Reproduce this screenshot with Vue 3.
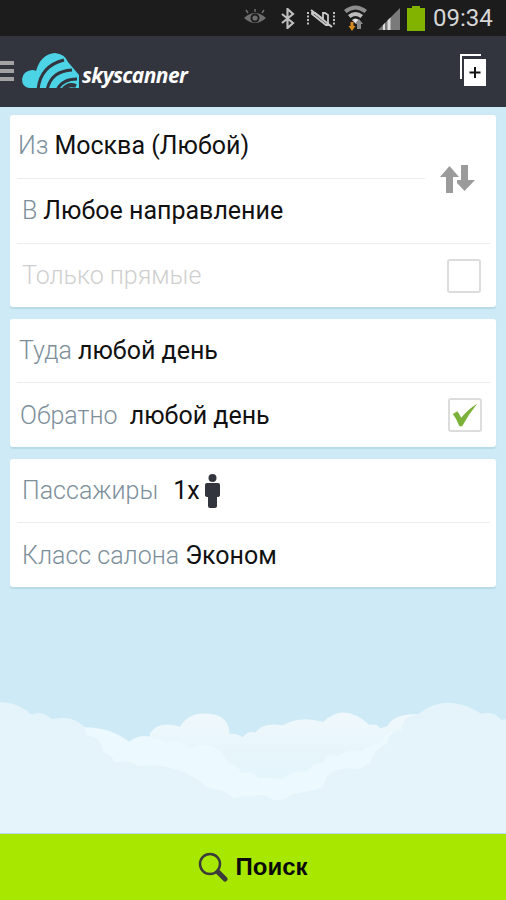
<script setup>
const statusColor = '#6f6f6f'
</script>

<template>
  <div class="page">
    <div class="status">
      <svg class="st-eye" width="24" height="18" viewBox="0 0 24 18">
        <path d="M1 9 Q12 -1 23 9 Q12 19 1 9Z" :fill="statusColor" />
        <circle cx="12" cy="9" r="4.5" fill="#1c1c1c" />
        <circle cx="12" cy="9" r="2.6" :fill="statusColor" />
        <path d="M3 1l2 3M12 0v3M21 1l-2 3" :stroke="statusColor" stroke-width="1.5" />
      </svg>
      <svg class="st-bt" width="14" height="21" viewBox="0 0 14 21">
        <path d="M1 6l11 9-5.500 5V1L12 6 1 15" fill="none" stroke="#bdbdbd" stroke-width="2.200" />
      </svg>
      <svg class="st-mute" width="29" height="19" viewBox="0 0 29 19">
        <path d="M1 3v13M27 3v13" stroke="#bdbdbd" stroke-width="2" stroke-dasharray="2 1.500" fill="none" />
        <path d="M5 4h3l8 6V4h2l3 2v10H19L5 5z" fill="none" stroke="#c9c9c9" stroke-width="1.800" />
        <path d="M4 1l21 17" stroke="#c9c9c9" stroke-width="2" />
      </svg>
      <svg class="st-wifi" width="25" height="29" viewBox="0 0 25 29">
        <path d="M1 7Q12.500 -2 24 7L21.500 10Q12.500 3 3.500 10Z" fill="#8d8d8d" />
        <path d="M5 12Q12.500 6 20 12L17.500 15Q12.500 11 7.500 15Z" fill="#bdbdbd" />
        <path d="M9 17Q12.500 14 16 17L12.500 20.500Z" fill="#e0e0e0" />
        <path d="M7.500 19h3v4h2l-3.500 5-3.500-5h2z" fill="#d98a1c" />
        <path d="M16 16l4 5h-2v5h-4v-5h-2z" fill="#8a8a8a" />
      </svg>
      <svg class="st-signal" width="22" height="22" viewBox="0 0 22 22">
        <path d="M0 22L22 0V22Z" fill="#7a7a7a" />
        <path d="M5 22V17L7 15V22ZM9.500 22V12.500L12.500 9.500V22Z" fill="#dcdcdc" />
      </svg>
      <svg class="st-bat" width="18" height="25" viewBox="0 0 18 25">
        <path d="M5 0h8v2h5v23H0V2h5z" fill="#82b300" />
      </svg>
      <span class="time">09:34</span>
    </div>

    <header class="bar">
      <div class="burger"><i></i><i></i><i></i></div>
      <svg class="logo-mark" width="57" height="36" viewBox="0 0 57 36">
        <path d="M7 35Q0 34 0 26Q1 18 10 17Q13 17 14 18Q19 1 33 0Q43 1 46 9L57 22V35Z" fill="#4cd3e6" />
        <g fill="none" stroke="#32353e">
          <path d="M16 37Q18 13 42 7" stroke-width="3" />
          <path d="M25 37Q29 18 50 17" stroke-width="3" />
          <path d="M35 37Q40 26 55 26" stroke-width="3" />
          <path d="M41 37Q46 30 54 33" stroke-width="4" />
        </g>
        <path d="M46 10L57 20V36H48Q50 32 57 35" fill="#32353e" opacity="0" />
      </svg>
      <span class="logo-text">skyscanner</span>
      <svg class="copy" width="27" height="33" viewBox="0 0 27 33">
        <path d="M1 25V1H21" fill="none" stroke="#fff" stroke-width="2" />
        <rect x="4" y="5" width="22" height="27" fill="#fff" />
        <path d="M15 13v11M9.500 18.500h11" stroke="#111" stroke-width="2" />
      </svg>
    </header>

    <main class="content">
      <svg class="clouds" width="506" height="143" viewBox="0 0 1518 429">
        <defs>
          <linearGradient id="backFade" x1="0" y1="0" x2="0" y2="1">
            <stop offset="0" stop-color="#f0f8fc" />
            <stop offset="0.7" stop-color="#e4f5fb" />
          </linearGradient>
        </defs>
        <path fill="url(#backFade)" d="M450 130Q475 90 540 110Q570 60 640 73Q690 85 688 132Q710 128 728 142Q745 120 765 128Q790 95 848 106Q900 75 970 96Q1030 35 1108 104Q1135 100 1140 115L1163 108Q1180 70 1260 72V300H450Z" />
        <path fill="#ecf9fe" d="M255 112Q330 112 387 155Q430 120 500 158Q540 145 572 175Q640 140 687 220Q715 225 725 250Q755 240 775 265Q810 260 848 268Q880 238 920 245Q935 220 968 218Q985 180 1015 200Q1050 175 1088 183Q1110 160 1135 160L1170 125L1205 120V400H255Z" />
        <path fill="#e4f4fa" d="M0 36Q60 38 95 74Q125 60 155 88Q215 72 255 112L258 137Q300 135 310 185Q335 195 345 218Q385 208 415 228Q540 215 622 293Q670 295 700 325Q740 315 765 320Q790 308 820 330Q850 335 880 312Q930 305 970 292Q975 240 1040 235L1075 238L1112 218Q1125 175 1162 160Q1165 125 1205 120Q1205 80 1255 72Q1340 5 1445 72Q1475 60 1505 90L1518 88V429H0Z" />
      </svg>

      <section class="card first">
        <div class="route">
          <div class="route-rows">
            <div class="row line from"><span class="label">Из</span> <span class="value">Москва (Любой)</span></div>
            <div class="row to"><span class="label">В</span> <span class="value">Любое направление</span></div>
          </div>
          <svg class="swap" width="36" height="28" viewBox="0 0 36 28">
            <path d="M9.500 1L19 12H13V28H6V12H0Z" fill="#9b9b9b" />
            <path d="M21 0H28V15H35L24.500 26L17 18V15H21Z" fill="#9b9b9b" />
          </svg>
        </div>
        <div class="row direct line-top">
          <span class="muted">Только прямые</span>
          <span class="box"></span>
        </div>
      </section>

      <section class="card">
        <div class="row line there"><span class="label">Туда</span> <span class="value">любой день</span></div>
        <div class="row back">
          <span><span class="label">Обратно</span> <span class="value">любой день</span></span>
          <span class="box checked">
            <svg width="32" height="32" viewBox="0 0 32 32">
              <path d="M3 15L8 12L12 19Q19 10 29 4Q20 15 13 28H10Q7 20 3 15Z" fill="#7cb23a" />
            </svg>
          </span>
        </div>
      </section>

      <section class="card">
        <div class="row line pax">
          <span class="label">Пассажиры</span>
          <span class="value count">1x</span>
          <svg width="15" height="34" viewBox="0 0 15 34">
            <circle cx="7.500" cy="4" r="4" fill="#32353e" />
            <path d="M2 9H13Q15 9 15 11V21Q15 23 12 23V32Q12 34 10 34H5Q3 34 3 32V23Q0 23 0 21V11Q0 9 2 9Z" fill="#32353e" />
          </svg>
        </div>
        <div class="row cabin"><span class="label">Класс салона</span> <span class="value">Эконом</span></div>
      </section>
    </main>

    <footer class="search">
      <svg width="30" height="30" viewBox="0 0 30 30">
        <circle cx="12" cy="12" r="10" fill="none" stroke="#3b3b3b" stroke-width="2.500" />
        <path d="M20 20L27 27" stroke="#3b3b3b" stroke-width="5" stroke-linecap="round" />
      </svg>
      <span>Поиск</span>
    </footer>
  </div>
</template>

<style scoped>
.page {
  width: 506px;
  height: 900px;
  display: flex;
  flex-direction: column;
  overflow: hidden;
  background: #cdeaf6;
  font-family: Roboto, sans-serif;
}

.status {
  height: 36px;
  flex: none;
  display: flex;
  align-items: center;
  background: #1c1c1c;
  padding-left: 243px;
}

.st-eye { margin-right: 14px; }
.st-bt { margin-right: 12px; }
.st-mute { margin-right: 7px; }
.st-wifi { margin-right: 10px; margin-top: -2px; }
.st-signal { margin-right: 7px; margin-top: 2px; }
.st-bat { margin-right: 8px; }

.time {
  color: #d6d6d6;
  font-size: 24px;
}

.bar {
  height: 71px;
  flex: none;
  display: flex;
  align-items: center;
  background: #32353e;
}

.burger {
  width: 14px;
  display: flex;
  flex-direction: column;
  gap: 4px;
  margin-top: -2px;
}

.burger i {
  display: block;
  height: 4px;
  background: #a3a3a3;
}

.logo-mark {
  margin-left: 8px;
  margin-top: -1px;
}

.logo-text {
  margin-left: 3px;
  margin-top: 6px;
  color: #fff;
  font-family: "Open Sans", sans-serif;
  font-style: italic;
  font-weight: 700;
  font-size: 21px;
  letter-spacing: -0.6px;
}

.copy {
  margin-left: auto;
  margin-right: 19px;
  margin-top: -3px;
}

.content {
  flex: 1;
  position: relative;
  display: flex;
  flex-direction: column;
  gap: 12px;
  padding: 8px 10px 0;
}

.clouds {
  position: absolute;
  left: 0;
  bottom: 0;
}

.card {
  position: relative;
  background: #fff;
  border-radius: 3px;
  box-shadow: 0 2px 1px #b9dbe8;
  padding: 0 6px 0 7px;
}

.route {
  display: flex;
  align-items: center;
}

.route-rows {
  flex: 1;
}

.swap {
  margin: 0 14px 0 15px;
  flex: none;
}

.row {
  height: 64px;
  box-sizing: border-box;
  display: flex;
  align-items: center;
  font-size: 25px;
  white-space: pre;
  padding-left: 5px;
}

.line {
  border-bottom: 1px solid #e9eded;
}

.line-top {
  border-top: 1px solid #e9eded;
}

.from { height: 64px; padding-left: 1px; padding-bottom: 2px; }
.to { padding-bottom: 2px; }
.direct { height: 64px; justify-content: space-between; padding-right: 9px; }
.there { padding-left: 2px; }
.back { padding-left: 3px; justify-content: space-between; padding-right: 8px; }

.label {
  color: #7d8f9b;
  font-weight: 300;
}

.value {
  color: #111;
  margin-left: 6px;
}

.count {
  margin-left: 15px;
  margin-right: 5px;
}

.muted {
  color: #cfcfcf;
  font-weight: 300;
}

.box {
  width: 34px;
  height: 34px;
  box-sizing: border-box;
  border: 2px solid #dcdcdc;
  border-radius: 3px;
}

.checked {
  display: flex;
  align-items: center;
  justify-content: center;
}

.search {
  height: 67px;
  flex: none;
  box-sizing: border-box;
  position: relative;
  display: flex;
  align-items: center;
  justify-content: center;
  gap: 7px;
  background: #a8e800;
  border-top: 1px solid #b9dbe8;
  color: #0a0a0a;
  font-family: "Liberation Sans", sans-serif;
  font-weight: 700;
  font-size: 24px;
}
</style>
